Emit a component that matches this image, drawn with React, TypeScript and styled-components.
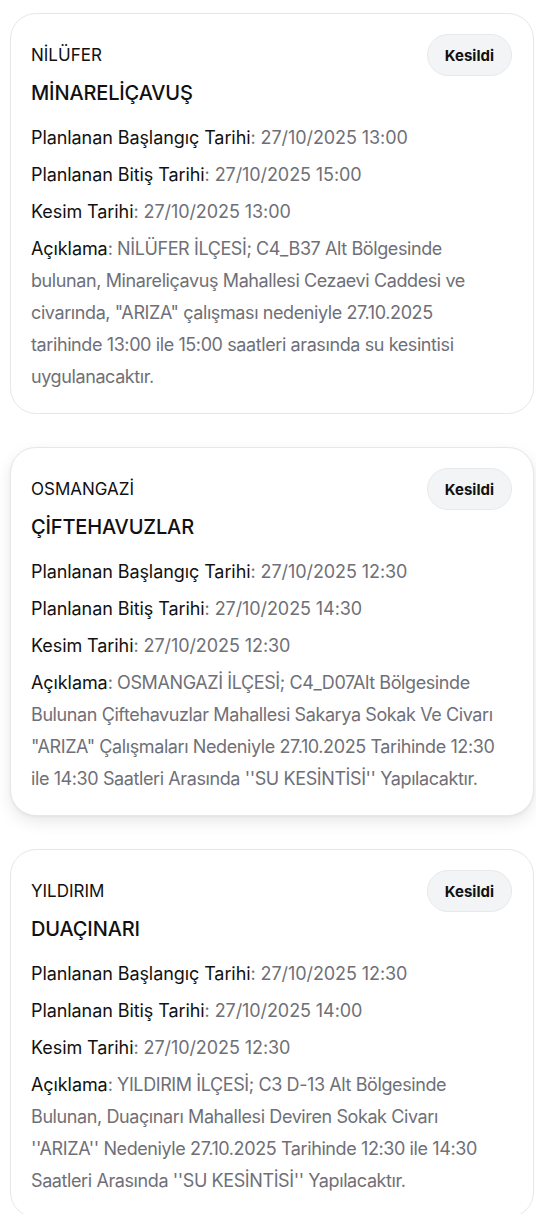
import React from "react";
import styled, { createGlobalStyle } from "styled-components";

const GlobalStyle = createGlobalStyle`
  html, body { margin: 0; padding: 0; background: #ffffff; }
  body { font-family: Inter, "Noto Sans", sans-serif; color: #111111; -webkit-font-smoothing: antialiased; }
  * { box-sizing: border-box; }
`;

const List = styled.div`
  display: flex;
  flex-direction: column;
  gap: 33px;
  padding: 13px 2px 0 10px;
`;

const Card = styled.div<{ $raised?: boolean }>`
  background: #fff;
  border: 1px solid #e6e7ea;
  border-radius: 26px;
  padding: 20px 21px 20px 20px;
  box-shadow: ${(p) => (p.$raised ? "0 6px 16px rgba(0,0,0,0.09), 0 1px 3px rgba(0,0,0,0.05)" : "none")};
`;

const Header = styled.div`
  display: flex;
  align-items: center;
  justify-content: space-between;
  height: 42px;
`;

const District = styled.div`
  font-size: 17px;
  font-weight: 400;
  color: #111;
  letter-spacing: 0;
`;

const Badge = styled.div`
  height: 42px;
  padding: 0 17px;
  border-radius: 21px;
  background: #f3f4f6;
  border: 1px solid #e8e9ec;
  display: flex;
  align-items: center;
  font-size: 15px;
  font-weight: 700;
  color: #111;
`;

const Title = styled.div`
  margin-top: 1px;
  font-size: 20px;
  line-height: 32px;
  font-weight: 500;
  color: #111;
  letter-spacing: -0.15px;
`;

const Fields = styled.div`
  margin-top: 13px;
  display: flex;
  flex-direction: column;
  gap: 5px;
`;

const Field = styled.div<{ $long?: boolean }>`
  font-size: 18px;
  line-height: 32px;
  color: #111;
  letter-spacing: -0.08px;
  padding-right: ${(p) => (p.$long ? "11px" : "0")};
`;

const Value = styled.span<{ $tight?: boolean }>`
  color: #6f7077;
  letter-spacing: ${(p) => (p.$tight ? "-0.4px" : "-0.08px")};
`;

type Item = {
  district: string;
  title: string;
  start: string;
  end: string;
  cut: string;
  desc: string;
  raised?: boolean;
};

const items: Item[] = [
  {
    district: "NİLÜFER",
    title: "MİNARELİÇAVUŞ",
    start: "27/10/2025 13:00",
    end: "27/10/2025 15:00",
    cut: "27/10/2025 13:00",
    desc:
      'NİLÜFER İLÇESİ; C4_B37 Alt Bölgesinde bulunan, Minareliçavuş Mahallesi Cezaevi Caddesi ve civarında, "ARIZA" çalışması nedeniyle 27.10.2025 tarihinde 13:00 ile 15:00 saatleri arasında su kesintisi uygulanacaktır.',
  },
  {
    district: "OSMANGAZİ",
    title: "ÇİFTEHAVUZLAR",
    start: "27/10/2025 12:30",
    end: "27/10/2025 14:30",
    cut: "27/10/2025 12:30",
    desc:
      "OSMANGAZİ İLÇESİ; C4_D07Alt Bölgesinde Bulunan Çiftehavuzlar Mahallesi Sakarya Sokak Ve Civarı \"ARIZA\" Çalışmaları Nedeniyle 27.10.2025 Tarihinde 12:30 ile 14:30 Saatleri Arasında ''SU KESİNTİSİ'' Yapılacaktır.",
    raised: true,
  },
  {
    district: "YILDIRIM",
    title: "DUAÇINARI",
    start: "27/10/2025 12:30",
    end: "27/10/2025 14:00",
    cut: "27/10/2025 12:30",
    desc:
      "YILDIRIM İLÇESİ; C3 D-13 Alt Bölgesinde Bulunan, Duaçınarı Mahallesi Deviren Sokak Civarı ''ARIZA'' Nedeniyle 27.10.2025 Tarihinde 12:30 ile 14:30 Saatleri Arasında ''SU KESİNTİSİ'' Yapılacaktır.",
  },
];

function Row({ label, value, long }: { label: string; value: string; long?: boolean }) {
  return (
    <Field $long={long}>
      {label}
      <Value $tight={long}>: {value}</Value>
    </Field>
  );
}

export default function App() {
  return (
    <>
      <GlobalStyle />
      <List>
        {items.map((it) => (
          <Card key={it.title} $raised={it.raised}>
            <Header>
              <District>{it.district}</District>
              <Badge>Kesildi</Badge>
            </Header>
            <Title>{it.title}</Title>
            <Fields>
              <Row label="Planlanan Başlangıç Tarihi" value={it.start} />
              <Row label="Planlanan Bitiş Tarihi" value={it.end} />
              <Row label="Kesim Tarihi" value={it.cut} />
              <Row label="Açıklama" value={it.desc} long />
            </Fields>
          </Card>
        ))}
      </List>
    </>
  );
}
